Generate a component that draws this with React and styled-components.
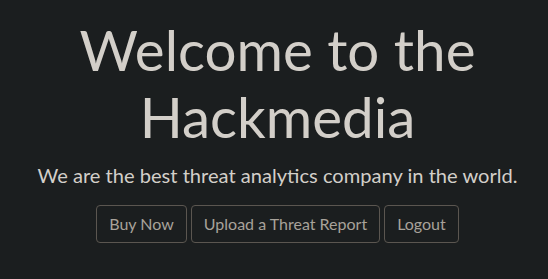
import React from 'react';
import styled, { createGlobalStyle } from 'styled-components';

const GlobalStyle = createGlobalStyle`
  html, body {
    margin: 0;
    background: #1b1e1f;
    font-family: Lato, "Noto Sans", sans-serif;
  }
`;

const Hero = styled.main`
  display: flex;
  flex-direction: column;
  align-items: center;
  padding: 16px 0 0 7px;
  color: #d3cfc9;
  text-align: center;
`;

const Title = styled.h1`
  margin: 0;
  font-size: 56.5px;
  font-weight: 400;
  line-height: 67px;
`;

const Lead = styled.p`
  margin: 10px 0 16px;
  font-size: 20.1px;
  line-height: 30px;
`;

const Actions = styled.div`
  display: flex;
  gap: 4px;
  margin-top: -1px;
`;

const Button = styled.button`
  font-family: inherit;
  font-size: 16px;
  line-height: 24px;
  padding: 6px 12px;
  color: #a8a29a;
  background: transparent;
  border: 1px solid #5b5650;
  border-radius: 4px;
  cursor: pointer;
`;

export default function App() {
  return (
    <>
      <GlobalStyle />
      <Hero>
        <Title>
          Welcome to the
          <br />
          Hackmedia
        </Title>
        <Lead>We are the best threat analytics company in the world.</Lead>
        <Actions>
          <Button>Buy Now</Button>
          <Button>Upload a Threat Report</Button>
          <Button>Logout</Button>
        </Actions>
      </Hero>
    </>
  );
}
